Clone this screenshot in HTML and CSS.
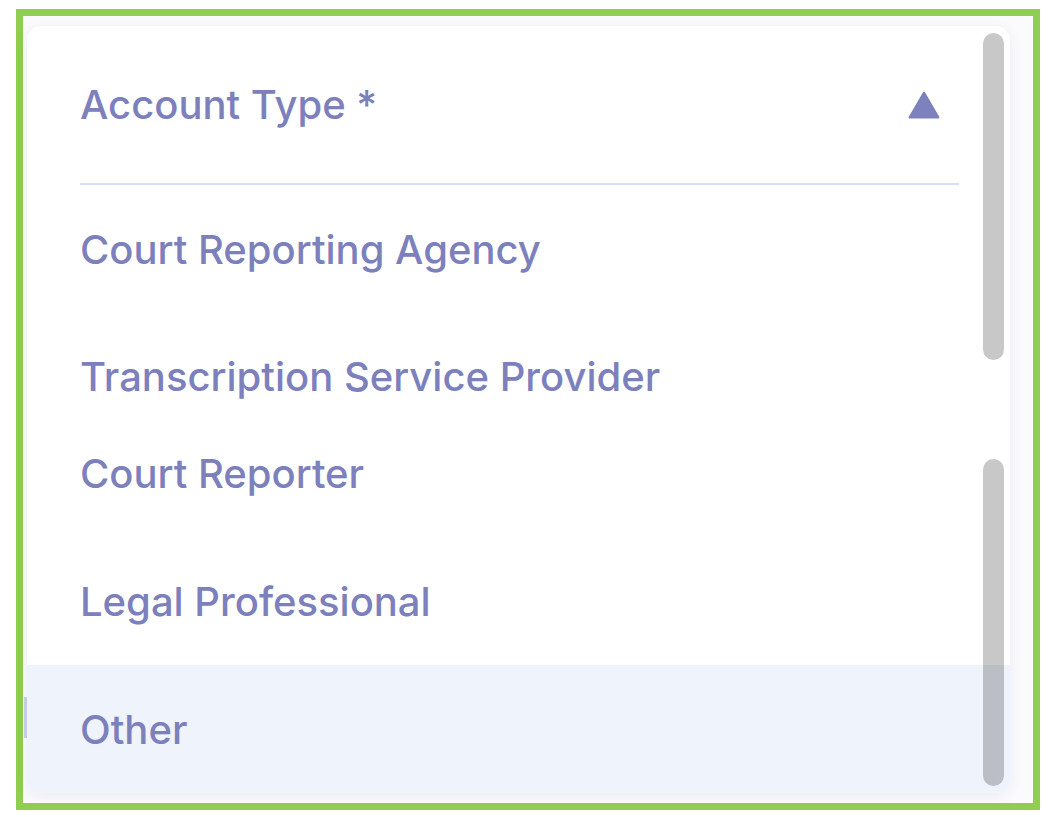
FILE: index.html
```html
<!DOCTYPE html>
<html>
<head>
<meta charset="utf-8">
<link rel="stylesheet" href="styles.css">
</head>
<body>
<div class="frame">
  <span class="peek"></span>
  <div class="card">
    <div class="header">
      <span class="label">Account Type *</span>
      <svg class="caret" width="32" height="28" viewBox="0 0 32 28"><path d="M16 1.5 L30.5 26.5 L1.5 26.5 Z" fill="#7d81be" stroke="#7d81be" stroke-width="2" stroke-linejoin="round"/></svg>
    </div>
    <div class="divider"></div>
    <ul class="options">
      <li class="option">Court Reporting Agency</li>
      <li class="option cut">Transcription Service Provider</li>
      <li class="option">Court Reporter</li>
      <li class="option">Legal Professional</li>
      <li class="option active">Other</li>
    </ul>
    <span class="thumb thumb-top"></span>
    <span class="thumb thumb-bottom"></span>
  </div>
</div>
</body>
</html>
```
FILE: styles.css
```css
html, body {
  margin: 0;
  padding: 0;
  background: #ffffff;
}
body {
  font-family: Inter, "Noto Sans", sans-serif;
  color: #7c80bd;
}
.frame {
  position: relative;
  box-sizing: border-box;
  margin: 9px 0 0 16px;
  width: 1024px;
  height: 801px;
  border: 7px solid #8fce4e;
  padding: 10px 23px 10px 4px;
  background: #fbfbfd;
}
.peek {
  position: absolute;
  left: 1px;
  top: 681px;
  width: 3px;
  height: 41px;
  background: #c9d3ef;
}
.card {
  position: relative;
  height: 767px;
  background: #ffffff;
  border-radius: 14px;
  box-shadow: 0 3px 14px rgba(70, 80, 140, 0.09);
  overflow: hidden;
}
.header {
  height: 157px;
  padding: 0 70px 0 53px;
  display: flex;
  align-items: center;
  justify-content: space-between;
}
.label, .option {
  font-size: 40px;
  font-weight: 500;
  letter-spacing: 0;
}
.caret {
  display: block;
}
.divider {
  height: 2px;
  margin: 0 51px 0 53px;
  background: #d8def3;
}
.options {
  list-style: none;
  margin: 0;
  padding: 0;
}
.option {
  height: 128px;
  padding-left: 53px;
  display: flex;
  align-items: center;
  box-sizing: border-box;
}
.option.cut {
  height: 96px;
  align-items: flex-start;
  padding-top: 39px;
}
.option.active {
  background: #eff3fc;
}
.thumb {
  position: absolute;
  right: 6px;
  width: 21px;
  border-radius: 11px;
  background: rgba(0, 0, 0, 0.215);
}
.thumb-top {
  top: 7px;
  height: 327px;
}
.thumb-bottom {
  top: 433px;
  height: 327px;
}
```
